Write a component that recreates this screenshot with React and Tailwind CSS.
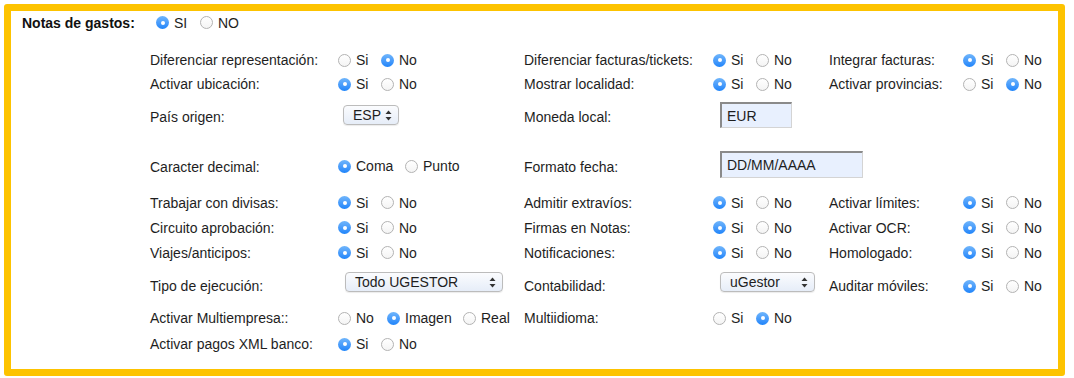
import React from 'react';

const Radio = ({ checked }) =>
  checked ? (
    <span className="w-[13px] h-[13px] rounded-full bg-linear-to-b from-[#6fb5fb] to-[#1c84fa] flex items-center justify-center shrink-0">
      <span className="w-[4px] h-[4px] rounded-full bg-white"></span>
    </span>
  ) : (
    <span className="w-[13px] h-[13px] rounded-full border border-[#b3b3b3] bg-linear-to-b from-white to-[#f4f4f4] shrink-0"></span>
  );

const Option = ({ label, checked, w = 'w-[43px]' }) => (
  <span className={`${w} flex items-center gap-[5px] shrink-0`}>
    <Radio checked={checked} />
    <span>{label}</span>
  </span>
);

const SiNo = ({ si }) => (
  <div className="flex items-center">
    <Option label="Si" checked={si} />
    <Option label="No" checked={!si} />
  </div>
);

const Arrows = () => (
  <svg width="7" height="11" viewBox="0 0 7 11" className="shrink-0">
    <path d="M3.5 0.5 L6.5 4 L0.5 4 Z" fill="#333" />
    <path d="M3.5 10.5 L6.5 7 L0.5 7 Z" fill="#333" />
  </svg>
);

const Select = ({ value, className }) => (
  <div
    className={`h-[20px] shrink-0 rounded-[4px] border border-[#bcbcbc] bg-linear-to-b from-[#fbfcfe] to-[#e6edf8] flex items-center justify-between pl-[9px] pr-[6px] shadow-[0_1px_1px_rgba(0,0,0,0.08)] ${className}`}
  >
    <span>{value}</span>
    <Arrows />
  </div>
);

const Input = ({ value, className }) => (
  <div
    className={`shrink-0 bg-[#e8f0fe] border-t-2 border-l-2 border-r border-b border-t-[#8a8a8a] border-l-[#8a8a8a] border-r-[#d4d4d4] border-b-[#d4d4d4] flex items-center pl-[5px] ${className}`}
  >
    {value}
  </div>
);

const Row = ({ h, children }) => (
  <div className={`grid grid-cols-[188px_186px_189px_116px_134px_1fr] ${h}`}>{children}</div>
);

const Cell = ({ children, className = '' }) => (
  <div className={`flex items-center ${className}`}>{children}</div>
);

export default function App() {
  return (
    <div className="w-[1074px] h-[378px] bg-white pt-[4px] pl-[4px] font-['Liberation_Sans',Arial,sans-serif] text-[14px] text-[#1e1e1e] leading-[16px]">
      <div className="w-[1061px] h-[372px] border-[7px] border-[#fdc300] rounded-[3px]">
        <div className="h-[23px] flex items-center pl-[11px]">
          <span className="w-[134px] font-bold text-[#111]">Notas de gastos:</span>
          <Option label="SI" checked w="w-[44px]" />
          <Option label="NO" checked={false} />
        </div>

        <div className="mt-[14px] pl-[139px]">
          <Row h="h-[24px]">
            <Cell>Diferenciar representación:</Cell>
            <Cell><SiNo si={false} /></Cell>
            <Cell>Diferenciar facturas/tickets:</Cell>
            <Cell><SiNo si /></Cell>
            <Cell>Integrar facturas:</Cell>
            <Cell><SiNo si /></Cell>
          </Row>
          <Row h="h-[24px]">
            <Cell>Activar ubicación:</Cell>
            <Cell><SiNo si /></Cell>
            <Cell>Mostrar localidad:</Cell>
            <Cell><SiNo si /></Cell>
            <Cell>Activar provincias:</Cell>
            <Cell><SiNo si={false} /></Cell>
          </Row>
          <Row h="h-[42px]">
            <Cell>País origen:</Cell>
            <Cell><Select value="ESP" className="ml-[5px] mb-[4px] w-[56px]" /></Cell>
            <Cell>Moneda local:</Cell>
            <Cell><Input value="EUR" className="ml-[7px] mb-[4px] w-[72px] h-[26px]" /></Cell>
            <Cell />
            <Cell />
          </Row>
          <Row h="h-[52px]">
            <Cell className="pt-[6px]">Caracter decimal:</Cell>
            <Cell className="pt-[4px]">
              <Option label="Coma" checked w="w-[67px]" />
              <Option label="Punto" checked={false} w="w-[70px]" />
            </Cell>
            <Cell className="pt-[6px]">Formato fecha:</Cell>
            <Cell><Input value="DD/MM/AAAA" className="ml-[7px] w-[143px] h-[27px]" /></Cell>
            <Cell />
            <Cell />
          </Row>
          <Row h="h-[25px]">
            <Cell>Trabajar con divisas:</Cell>
            <Cell><SiNo si /></Cell>
            <Cell>Admitir extravíos:</Cell>
            <Cell><SiNo si /></Cell>
            <Cell>Activar límites:</Cell>
            <Cell><SiNo si /></Cell>
          </Row>
          <Row h="h-[25px]">
            <Cell>Circuito aprobación:</Cell>
            <Cell><SiNo si /></Cell>
            <Cell>Firmas en Notas:</Cell>
            <Cell><SiNo si /></Cell>
            <Cell>Activar OCR:</Cell>
            <Cell><SiNo si /></Cell>
          </Row>
          <Row h="h-[25px]">
            <Cell>Viajes/anticipos:</Cell>
            <Cell><SiNo si /></Cell>
            <Cell>Notificaciones:</Cell>
            <Cell><SiNo si /></Cell>
            <Cell>Homologado:</Cell>
            <Cell><SiNo si /></Cell>
          </Row>
          <Row h="h-[38px]">
            <Cell className="pt-[4px]">Tipo de ejecución:</Cell>
            <Cell><Select value="Todo UGESTOR" className="ml-[7px] mb-[4px] w-[158px]" /></Cell>
            <Cell className="pt-[4px]">Contabilidad:</Cell>
            <Cell><Select value="uGestor" className="ml-[7px] mb-[4px] w-[95px]" /></Cell>
            <Cell className="pt-[4px]">Auditar móviles:</Cell>
            <Cell className="pt-[4px]"><SiNo si /></Cell>
          </Row>
          <Row h="h-[30px]">
            <Cell>Activar Multiempresa::</Cell>
            <Cell>
              <Option label="No" checked={false} w="w-[49px]" />
              <Option label="Imagen" checked w="w-[76px]" />
              <Option label="Real" checked={false} w="w-[50px]" />
            </Cell>
            <Cell>Multiidioma:</Cell>
            <Cell><SiNo si={false} /></Cell>
            <Cell />
            <Cell />
          </Row>
          <Row h="h-[22px]">
            <Cell>Activar pagos XML banco:</Cell>
            <Cell><SiNo si /></Cell>
            <Cell />
            <Cell />
            <Cell />
            <Cell />
          </Row>
        </div>
      </div>
    </div>
  );
}
